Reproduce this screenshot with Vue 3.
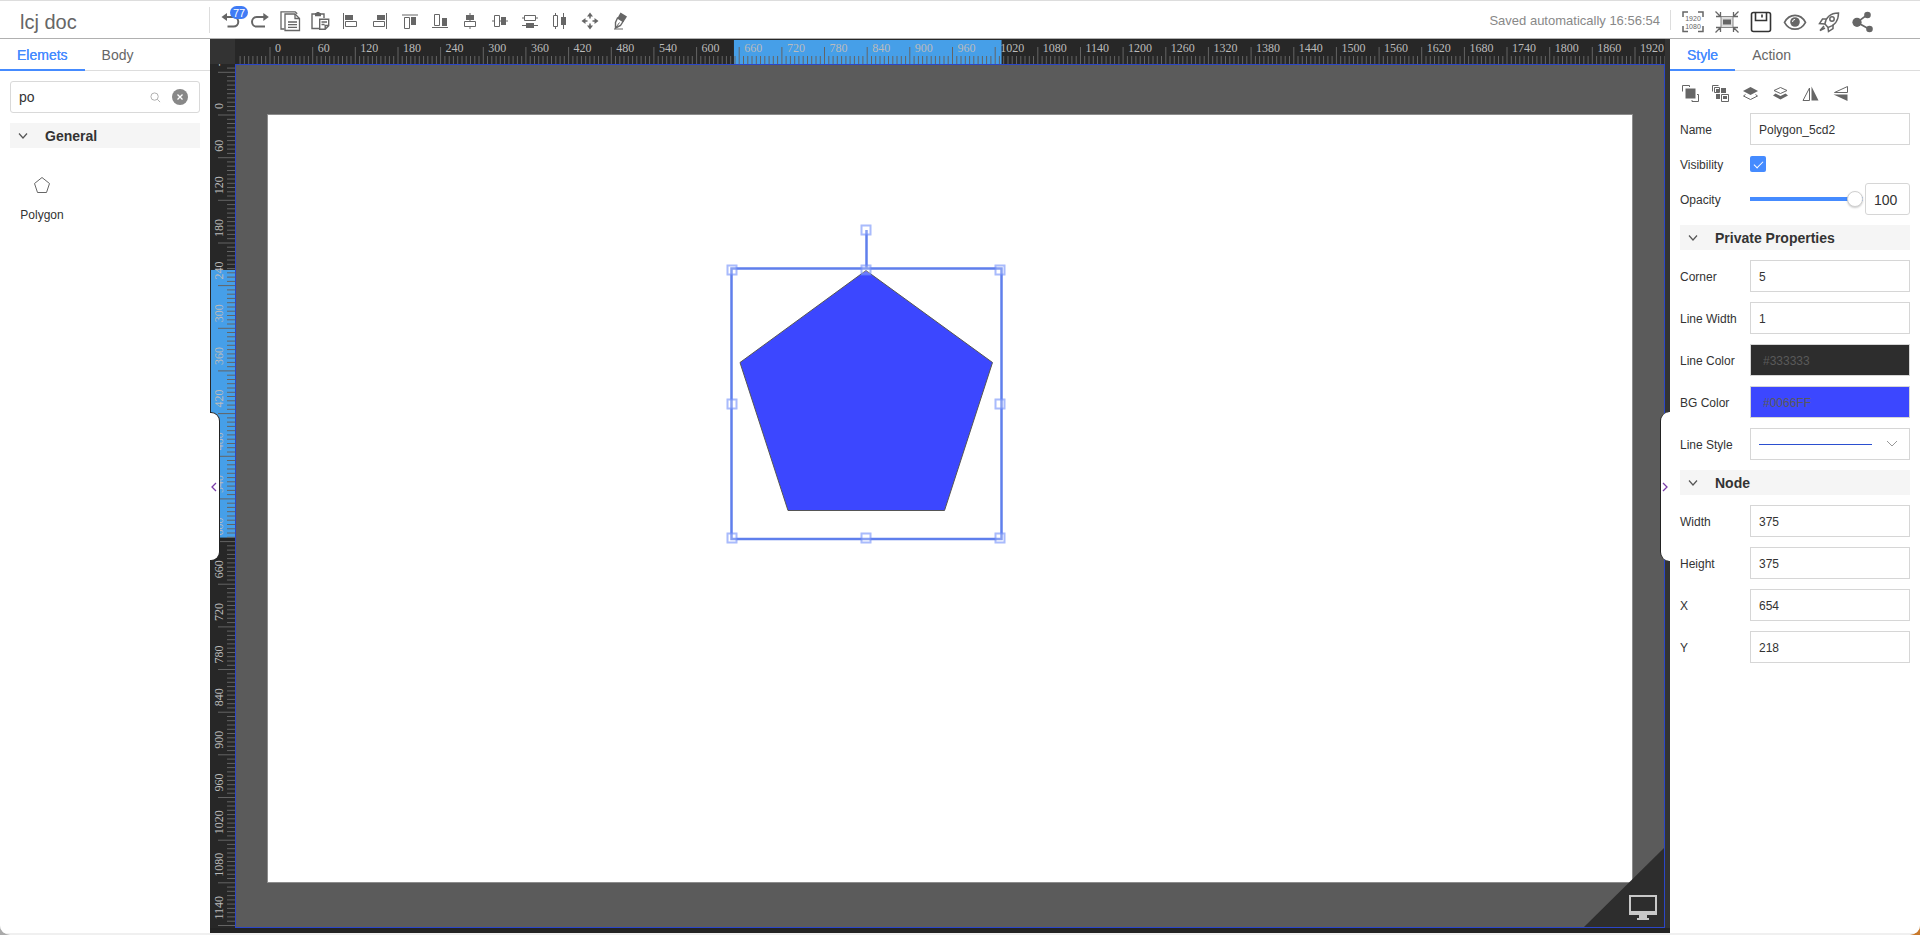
<script setup>
import { ref } from 'vue'

const search = ref('po')
const name = ref('Polygon_5cd2')
const visible = ref(true)
const opacity = ref(100)
const corner = ref('5')
const lineWidth = ref('1')
const lineColor = ref('#333333')
const bgColor = ref('#0066FF')
const geometry = ref([
  { id: 'width', label: 'Width', value: '375' },
  { id: 'height', label: 'Height', value: '375' },
  { id: 'x', label: 'X', value: '654' },
  { id: 'y', label: 'Y', value: '218' },
])

// Canvas zoom: screen pixels per document unit
const scale = 1365 / 1920
const node = { x: 654, y: 218, size: 375 }

function ruler(origin, from, to) {
  const ticks = []
  for (let unit = from; unit <= to; unit += 6) {
    ticks.push({ unit, pos: Math.round((origin + unit * scale) * 10) / 10, major: unit % 60 === 0 })
  }
  return ticks
}
const hTicks = ruler(35, -42, 1962)
const vTicks = ruler(51, -66, 1140)
const hLabels = hTicks.filter((t) => t.major && t.unit <= 1920)
const vLabels = vTicks.filter((t) => t.major)
const span = node.size * scale + 1
const hStart = 34 + node.x * scale
const vStart = 51 + node.y * scale

const handles = [
  [464, 155], [598, 155], [732, 155],
  [464, 289], [732, 289],
  [464, 423], [598, 423], [732, 423],
  [598, 115],
]

const tools = [
  { id: 'undo', title: 'Undo', badge: '77' },
  { id: 'redo', title: 'Redo' },
  { id: 'copy', title: 'Copy' },
  { id: 'paste', title: 'Paste' },
  { id: 'left', title: 'Align left' },
  { id: 'right', title: 'Align right' },
  { id: 'top', title: 'Align top' },
  { id: 'bottom', title: 'Align bottom' },
  { id: 'centerH', title: 'Align center' },
  { id: 'centerV', title: 'Align middle' },
  { id: 'distV', title: 'Distribute vertically' },
  { id: 'distH', title: 'Distribute horizontally' },
  { id: 'move', title: 'Move' },
  { id: 'pen', title: 'Pen' },
]
const icons = {
  undo: '<path d="M7 8h8.500a4.800 4.800 0 0 1 0 9.600H9.500" fill="none" stroke="#666" stroke-width="2"/><path d="M3.500 8L9 4v8z"/>',
  redo: '<path d="M17 8H8.800a4.800 4.800 0 0 0 0 9.600H17" fill="none" stroke="#666" stroke-width="2"/><path d="M20.800 8l-5.500-4v8z"/>',
  copy: '<g fill="none" stroke="#666" stroke-width="1.300"><path d="M6.500 20H3V2.800h14.200l2 2"/><path d="M7 5h10l4.500 4.500v12H7z"/><path d="M17 5v4.500h4.500M10 13h9M10 15.700h9M10 18.400h9"/></g>',
  paste: '<g fill="none" stroke="#666" stroke-width="1.400"><path d="M11 19.500H4V5h3M13 5h3v4"/><path d="M11.700 10.300h9v6.500l-3.500 3.500h-5.500zM17.200 20v-3.500h3.500M13.500 13h5.500M13.500 15.500h3"/></g><path d="M7 4h1.500V3h3v1H13v3.200H7z"/>',
  left: '<path d="M5 4h1v16H5zM7 6h8v5H7z"/><path d="M7.500 12.500h11v5h-11z" class="o"/>',
  right: '<path d="M18 4h1v16h-1zM9 6h8v5H9z"/><path d="M5.500 12.500h11v5h-11z" class="o"/>',
  top: '<path d="M4 5.500h16v1H4zM13 8h5v8h-5z"/><path d="M6.500 8.500h5v11h-5z" class="o"/>',
  bottom: '<path d="M4 18h16v1H4zM14 9h5v8h-5z"/><path d="M6.500 5.500h5v11h-5z" class="o"/>',
  centerH: '<path d="M11.500 4h1v8h-1zM11.500 18h1v2h-1zM8 6h8v5H8z"/><path d="M6.500 12.500h11v5h-11z" class="o"/>',
  centerV: '<path d="M4 11.500h2v1H4zM11 11.500h9v1h-9zM13 8h5v8h-5z"/><path d="M6.500 6.500h5v11h-5z" class="o"/>',
  distV: '<path d="M4 8.500h2v1H4zM18 8.500h2v1h-2zM4 16h16v1H4zM8 14h8v5H8z"/><path d="M6.500 6.500h11v5h-11z" class="o"/>',
  distH: '<path d="M7 4h1v2H7zM7 18h1v2H7zM15 4h1v16h-1zM13 8h5v8h-5z"/><path d="M5.500 6.500h4v11h-4z" class="o"/>',
  move: '<path d="M12 3.500l3 4H9zM12 20.500l3-4H9zM3.500 12l4-3v6zM20.500 12l-4-3v6z"/><path d="M12 7v2.500M12 14.500V17M7 12h2.500M14.500 12H17" stroke="#666" stroke-width="1.500"/>',
  pen: '<path d="M12.500 3.500l6.500 4-3.500 5.500-6-4z"/><path d="M9.500 9l5.500 3.500-2.500 4-5 2.500 0-5.500z" fill="none" stroke="#666" stroke-width="1.400"/><path d="M7.500 19l4-5.500" stroke="#666"/><path d="M6 19.500h9v1H6z"/>',
}
const actions = [
  { id: 'size', title: 'Resolution' },
  { id: 'fit', title: 'Fit to screen' },
  { id: 'save', title: 'Save' },
  { id: 'eye', title: 'Preview' },
  { id: 'rocket', title: 'Publish' },
  { id: 'share', title: 'Share' },
]
const arrange = [
  { id: 'group', title: 'Group', svg: '<path d="M3.500 3.500h10v10h-10z"/><path d="M.500 6.500v-6h7v1.500M15 9.500h1.500v7h-6.500V15" class="o"/>' },
  { id: 'ungroup', title: 'Ungroup', svg: '<path d="M4 4h3v3H4zM9 3h5v5H9zM4 9h4v5H4zM11 11h4v3h-4z"/><path d="M.500 6.500v-6h6M2.500 2.500h5v5h-5zM9.500 9.500h7v7h-7z" class="o"/>' },
  { id: 'front', title: 'Bring forward', svg: '<path d="M8.500 2L16 6l-7.500 4L1 6z"/><path d="M3.500 9.500L1.500 11l7 3.500 7-3.500-2-1.500" class="o"/>' },
  { id: 'back', title: 'Send backward', svg: '<path d="M3.500 8.500L1 10.500l7.500 4 7.500-4-2.500-2-5 2.500z"/><path d="M8.500 2.500l6.500 3-6.500 3-6.500-3z" class="o"/>' },
  { id: 'mirror', title: 'Flip horizontal', svg: '<path d="M9.500 1.500l7 14h-7z"/><path d="M7.500 3v12.500h-6.500z" class="o"/>' },
  { id: 'flip', title: 'Flip vertical', svg: '<path d="M1.500 9.500h14v6.500z"/><path d="M15.500 1.500v6h-13z" class="o"/>' },
]
</script>

<template>
  <div class="app">
    <header class="bar">
      <div class="brand">lcj doc</div>
      <div class="tools">
        <button v-for="t in tools" :key="t.id" class="tool" type="button" :aria-label="t.title">
          <svg viewBox="0 0 24 24" v-html="icons[t.id]" />
          <span v-if="t.badge" class="badge">{{ t.badge }}</span>
        </button>
      </div>
      <div class="saved">Saved automatically 16:56:54</div>
      <div class="actions">
        <button v-for="a in actions" :key="a.id" class="action" type="button" :aria-label="a.title">
          <svg v-if="a.id === 'size'" viewBox="0 0 24 24">
            <path d="M2 8V3h5M17 3h5v5M2 17v5.500h5M17 22.500h5V17" class="o" stroke-width="1.500" />
            <text x="12" y="12" class="mini">1920</text>
            <text x="12" y="20" class="mini">1080</text>
          </svg>
          <svg v-else-if="a.id === 'fit'" viewBox="0 0 24 24">
            <path d="M6 7.500h12v11H6z" fill="#ddd" stroke="#888" />
            <path d="M8 10.500h8v5H8z" />
            <path d="M.500 2.500L5 7M23.500 2.500L19 7M.500 23.500L5 19M23.500 23.500L19 19M5.500 3v4.500H1M18.500 3v4.500H23M5.500 23v-4.500H1M18.500 23v-4.500H23" class="o" stroke-width="1.300" />
          </svg>
          <svg v-else-if="a.id === 'save'" viewBox="0 0 24 24">
            <rect x="2.500" y="3.500" width="19" height="19" rx="2" fill="none" stroke="#333" stroke-width="1.600" />
            <path d="M6.500 3.500v8h11v-8M13 5.500v3" fill="none" stroke="#333" stroke-width="1.600" />
          </svg>
          <svg v-else-if="a.id === 'eye'" viewBox="0 0 24 24">
            <path d="M1.500 13.300C6.500 4 17.500 4 22.500 13.300C17.500 22.500 6.500 22.500 1.500 13.300z" fill="none" stroke="#666" stroke-width="1.700" />
            <circle cx="12" cy="13" r="4.800" />
            <path d="M9.500 13a2.600 2.600 0 0 1 2.600-2.600" fill="none" stroke="#fff" />
          </svg>
          <svg v-else-if="a.id === 'rocket'" viewBox="0 0 24 24">
            <g fill="none" stroke="#666" stroke-width="1.500">
              <path d="M8 15C8.500 9 13 4 21.500 4C21.500 12 17 17 11 18.500z" />
              <path d="M9.500 10H5.500L2.500 14.500 8 15M16 15.500v4L11.500 22.500 11 18.500M7 17l-4 4.500L8 19" />
              <circle cx="15" cy="10" r="2.200" />
            </g>
          </svg>
          <svg v-else viewBox="0 0 24 24">
            <path d="M16 6L6 13.300 18 20" fill="none" stroke="#666" stroke-width="1.600" />
            <circle cx="6" cy="13.300" r="4.600" /><circle cx="16.500" cy="6" r="3.300" /><circle cx="18.500" cy="20" r="3.300" />
          </svg>
        </button>
      </div>
    </header>

    <main class="main">
      <aside class="side left">
        <nav class="tabs">
          <button type="button" class="tab active">Elemets</button>
          <button type="button" class="tab">Body</button>
        </nav>
        <div class="stack">
          <div class="search">
            <input v-model="search" type="text" aria-label="Search elements" />
            <svg class="lens" viewBox="0 0 12 12"><circle cx="5" cy="5" r="4" /><path d="M8 8l3 3" /></svg>
            <button type="button" class="clear" aria-label="Clear search">
              <svg viewBox="0 0 16 16"><circle cx="8" cy="8" r="8" /><path d="M5.500 5.500l5 5M10.500 5.500l-5 5" stroke="#fff" stroke-width="1.300" /></svg>
            </button>
          </div>
          <button type="button" class="section">
            <svg class="chev" viewBox="0 0 10 8"><path d="M1 1.500l4 4.500 4-4.500" /></svg>General
          </button>
          <div class="shapes">
            <button type="button" class="shape">
              <svg viewBox="0 0 18 18"><path d="M9 1.500l7.500 6L13.500 16.500h-9L1.500 7.500z" /></svg>
              <span>Polygon</span>
            </button>
          </div>
        </div>
      </aside>

      <section class="stage">
        <div class="corner"></div>
        <div class="ruler">
          <svg class="hscale">
            <rect :x="hStart" y="1" :width="span" height="24" class="range" />
            <path v-for="t in hTicks" :key="t.unit" :d="`M${t.pos} ${t.major ? 8 : 17}V25`" class="tick" />
            <text v-for="t in hLabels" :key="t.unit" :x="t.pos + 5" y="13">{{ t.unit }}</text>
          </svg>
        </div>
        <div class="edge"></div>
        <div class="ruler">
          <svg class="vscale">
            <rect x="1" :y="vStart" width="24" :height="span" class="range" />
            <path v-for="t in vTicks" :key="t.unit" :d="`M${t.major ? 8 : 17} ${t.pos}H25`" class="tick" />
            <text v-for="t in vLabels" :key="t.unit" :transform="`translate(13 ${t.pos - 6}) rotate(-90)`">{{ t.unit }}</text>
          </svg>
        </div>
        <div class="workspace">
          <div class="page">
            <svg class="drawing">
              <path d="M598 155.500L724.500 247.500 676.500 395.500H520L472 247.500z" fill="#3c47ff" stroke="#555" />
              <g stroke="#5f7fec" fill="none">
                <rect x="463.500" y="153.500" width="270" height="270.500" stroke-width="2.500" />
                <path d="M598.500 115v38" stroke-width="2.500" />
              </g>
              <rect v-for="([x, y], i) in handles" :key="i" :x="x - 4.5" :y="y - 4.5" width="9" height="9" class="handle" />
            </svg>
          </div>
          <button type="button" class="device" aria-label="Screen device">
            <svg viewBox="0 0 28 26"><path d="M0 1h28v20H0zM2 3v14h24V3zM10 21h8v3h2v2H8v-2h2z" fill-rule="evenodd" /></svg>
          </button>
        </div>
        <div class="edge"></div>
        <div class="foot"></div>
        <button type="button" class="drawer dl" aria-label="Collapse elements"><svg viewBox="0 0 6 10"><path d="M5 1L1 5l4 4" /></svg></button>
        <button type="button" class="drawer dr" aria-label="Collapse properties"><svg viewBox="0 0 6 10"><path d="M1 1l4 4-4 4" /></svg></button>
      </section>

      <aside class="side props">
        <nav class="tabs">
          <button type="button" class="tab active">Style</button>
          <button type="button" class="tab">Action</button>
        </nav>
        <form class="stack" @submit.prevent>
          <div class="arrange">
            <button v-for="a in arrange" :key="a.id" type="button" :aria-label="a.title"><svg viewBox="0 0 17 17" v-html="a.svg" /></button>
          </div>
          <div class="row"><label for="name">Name</label><input id="name" v-model="name" class="field" type="text" /></div>
          <div class="row short"><label for="visible">Visibility</label><input id="visible" v-model="visible" class="check" type="checkbox" /></div>
          <div class="row">
            <label for="opacity">Opacity</label>
            <div class="opacity">
              <input id="opacity" v-model="opacity" type="range" min="0" max="100" />
              <input v-model="opacity" class="field num" type="text" aria-label="Opacity value" />
            </div>
          </div>
          <button type="button" class="section"><svg class="chev" viewBox="0 0 10 8"><path d="M1 1.500l4 4.500 4-4.500" /></svg>Private Properties</button>
          <div class="row"><label for="corner">Corner</label><input id="corner" v-model="corner" class="field" type="text" /></div>
          <div class="row"><label for="lw">Line Width</label><input id="lw" v-model="lineWidth" class="field" type="text" /></div>
          <div class="row"><label for="lc">Line Color</label><input id="lc" v-model="lineColor" class="field swatch dark" type="text" /></div>
          <div class="row"><label for="bg">BG Color</label><input id="bg" v-model="bgColor" class="field swatch blue" type="text" /></div>
          <div class="row">
            <label for="ls">Line Style</label>
            <div class="pick">
              <select id="ls" class="field"><option value="solid" aria-label="Solid"></option></select>
              <svg viewBox="0 0 12 8"><path d="M1 1l5 5 5-5" /></svg>
            </div>
          </div>
          <button type="button" class="section"><svg class="chev" viewBox="0 0 10 8"><path d="M1 1.500l4 4.500 4-4.500" /></svg>Node</button>
          <div v-for="g in geometry" :key="g.id" class="row">
            <label :for="g.id">{{ g.label }}</label><input :id="g.id" v-model="g.value" class="field" type="text" />
          </div>
        </form>
      </aside>
    </main>
  </div>
</template>

<style>
body {
  background: linear-gradient(90deg, #aaa 50%, #c9792b 50%);
}
</style>

<style scoped>
.app, .app * { box-sizing: border-box; }
.app {
  display: flex;
  flex-direction: column;
  height: 100vh;
  min-height: 700px;
  padding-bottom: 2px;
  overflow: hidden;
  border-radius: 0 0 10px 10px;
  background: #f0f0f0;
  color: #333;
  font-family: "Liberation Sans", Arial, sans-serif;
  font-size: 12px;
}
button, input, select { font: inherit; color: inherit; margin: 0; }
button { padding: 0; border: 0; background: none; cursor: pointer; }
svg { display: block; }
svg :deep(.o) { fill: none; stroke: #666; }

.bar {
  display: flex;
  align-items: center;
  flex: none;
  height: 39px;
  background: #fff;
  border-top: 1px solid #ddd;
  border-bottom: 1px solid #b0b0b0;
}
.brand {
  width: 210px;
  height: 26px;
  padding-left: 20px;
  border-right: 1px solid #ddd;
  font-size: 20px;
  line-height: 30px;
  color: #666;
}
.tools { display: flex; gap: 6px; margin-left: 8px; }
.tool, .action { position: relative; width: 24px; height: 24px; margin-top: 2px; }
.tool svg, .action svg { width: 24px; height: 24px; fill: #666; }
.badge {
  position: absolute;
  left: 12px;
  top: -3px;
  height: 13px;
  padding: 0 3px;
  border-radius: 7px;
  background: #3f7bf5;
  color: #fff;
  font-size: 11px;
  line-height: 14px;
}
.saved { margin-left: auto; padding-right: 10px; font-size: 13px; line-height: 22px; padding-top: 2px; color: #888; }
.actions { display: flex; align-items: center; gap: 10px; width: 250px; height: 20px; padding-left: 10px; border-left: 1px solid #ddd; }
.mini { font-size: 7px; text-anchor: middle; }

.main { display: flex; flex: 1; min-height: 0; }
.side { flex: none; background: #fff; }
.left { width: 210px; }
.props { width: 250px; }
.tabs { display: flex; height: 32px; border-bottom: 1px solid #ddd; }
.tab { height: 32px; padding: 0 17px; border-bottom: 2px solid transparent; font-size: 14px; line-height: 32px; color: #666; }
.tab.active { color: #458bff; border-bottom-color: #458bff; text-shadow: 0 0 #458bff; }
.stack { display: flex; flex-direction: column; gap: 10px; padding: 10px; }

.search {
  display: flex;
  align-items: center;
  height: 32px;
  padding: 0 11px 0 8px;
  border: 1px solid #d9d9d9;
  border-radius: 3px;
}
.search input { flex: 1; min-width: 0; padding: 0; border: 0; outline: 0; font-size: 14px; }
.lens { width: 11px; height: 11px; margin-right: 11px; fill: none; stroke: #aaa; }
.clear { width: 16px; height: 16px; }
.clear svg { width: 16px; height: 16px; fill: #888; }
.section {
  display: flex;
  align-items: center;
  gap: 17px;
  width: 100%;
  height: 25px;
  padding: 0 8px;
  background: #f5f5f5;
  font-size: 14px;
  font-weight: 700;
}
.chev { width: 10px; height: 8px; fill: none; stroke: #555; stroke-width: 1.2; }
.shapes { display: flex; padding-top: 18px; }
.shape { display: flex; flex-direction: column; align-items: center; gap: 12px; width: 64px; }
.shape svg { width: 18px; height: 18px; fill: none; stroke: #666; }
.shape span { line-height: 18px; }

.stage {
  position: relative;
  display: grid;
  flex: 1;
  min-width: 0;
  grid-template: 25px minmax(0, 1fr) 5px / 25px minmax(0, 1fr) 5px;
  background: #272727;
}
.corner, .edge { background: #333; }
.foot { grid-column: 1 / -1; background: #232323; }
.ruler { overflow: hidden; min-width: 0; min-height: 0; background: #272727; }
.hscale { width: 100%; height: 25px; }
.vscale { width: 25px; height: 100%; }
.ruler text { fill: #bbb; font-family: "Liberation Serif", serif; font-size: 12px; }
.tick { stroke: #646464; }
.range { fill: #469fe8; }
.workspace {
  position: relative;
  display: flex;
  overflow: hidden;
  padding: 49px 31px 44px 31px;
  border: 1px solid #2b46c8;
  background: #5b5b5b;
}
.page { flex: 1; min-width: 0; overflow: hidden; border: 1px solid #8c8c8c; background: #fff; }
.drawing { width: 100%; height: 100%; }
.handle { fill: #fff; fill-opacity: 0.25; stroke: #6f8dfa; stroke-opacity: 0.6; stroke-width: 2; }
.device {
  position: absolute;
  right: 0;
  bottom: 0;
  width: 80px;
  height: 79px;
  background: #2d2d2d;
  clip-path: polygon(100% 0, 100% 100%, 0 100%);
}
.device svg { width: 28px; height: 26px; margin: 38px 0 0 45px; fill: #c8c8c8; }
.drawer {
  position: absolute;
  top: calc(50% - 74px);
  display: flex;
  align-items: center;
  width: 10px;
  height: 149px;
  background: #fff;
}
.drawer svg { width: 6px; height: 10px; fill: none; stroke: #7a3ea8; stroke-width: 1.3; }
.dl { left: 0; padding-left: 1px; border: 1px solid #222; border-left: 0; border-radius: 0 9px 9px 0; }
.dr { right: 0; padding-left: 1px; border-left: 1px solid #222; border-radius: 9px 0 0 9px; }

.arrange { display: flex; gap: 13px; height: 22px; padding: 3px 0 0 2px; }
.arrange svg { width: 17px; height: 17px; fill: #666; }
.row { display: grid; grid-template-columns: 70px minmax(0, 1fr); align-items: center; min-height: 32px; }
.row label { padding-top: 2px; }
.row.short { min-height: 18px; }
.field {
  width: 100%;
  height: 32px;
  padding: 1px 8px 0;
  border: 1px solid #d6d6d6;
  border-radius: 0;
  outline: 0;
  background: #fff;
}
.check {
  display: grid;
  place-content: center;
  appearance: none;
  width: 16px;
  height: 16px;
  border-radius: 2px;
  background: #458bff;
}
.check::before {
  content: "";
  width: 8px;
  height: 4px;
  margin-bottom: 2px;
  border: solid #fff;
  border-width: 0 0 1px 1px;
  transform: rotate(-45deg);
}
.opacity { display: flex; align-items: center; gap: 2px; }
.opacity input[type="range"] { flex: 1; min-width: 0; height: 18px; appearance: none; background: linear-gradient(#458bff, #458bff) center / 100% 4px no-repeat; }
.opacity input[type="range"]::-webkit-slider-thumb {
  appearance: none;
  width: 16px;
  height: 16px;
  border: 1px solid #d0d0d0;
  border-radius: 50%;
  background: #fff;
  box-shadow: 0 1px 2px #0003;
}
.num { flex: none; width: 45px; border-radius: 3px; font-size: 14px; }
.swatch { padding-left: 12px; color: #5a5a5a; }
.dark { background: #2d2d2d; }
.blue { background: #3c47ff; }
.pick { position: relative; }
.pick select { display: block; appearance: none; background: linear-gradient(#2b4fd0, #2b4fd0) 8px 15px / 113px 1px no-repeat #fff; }
.pick svg { position: absolute; right: 12px; top: 12px; width: 12px; height: 8px; fill: none; stroke: #999; pointer-events: none; }
</style>
